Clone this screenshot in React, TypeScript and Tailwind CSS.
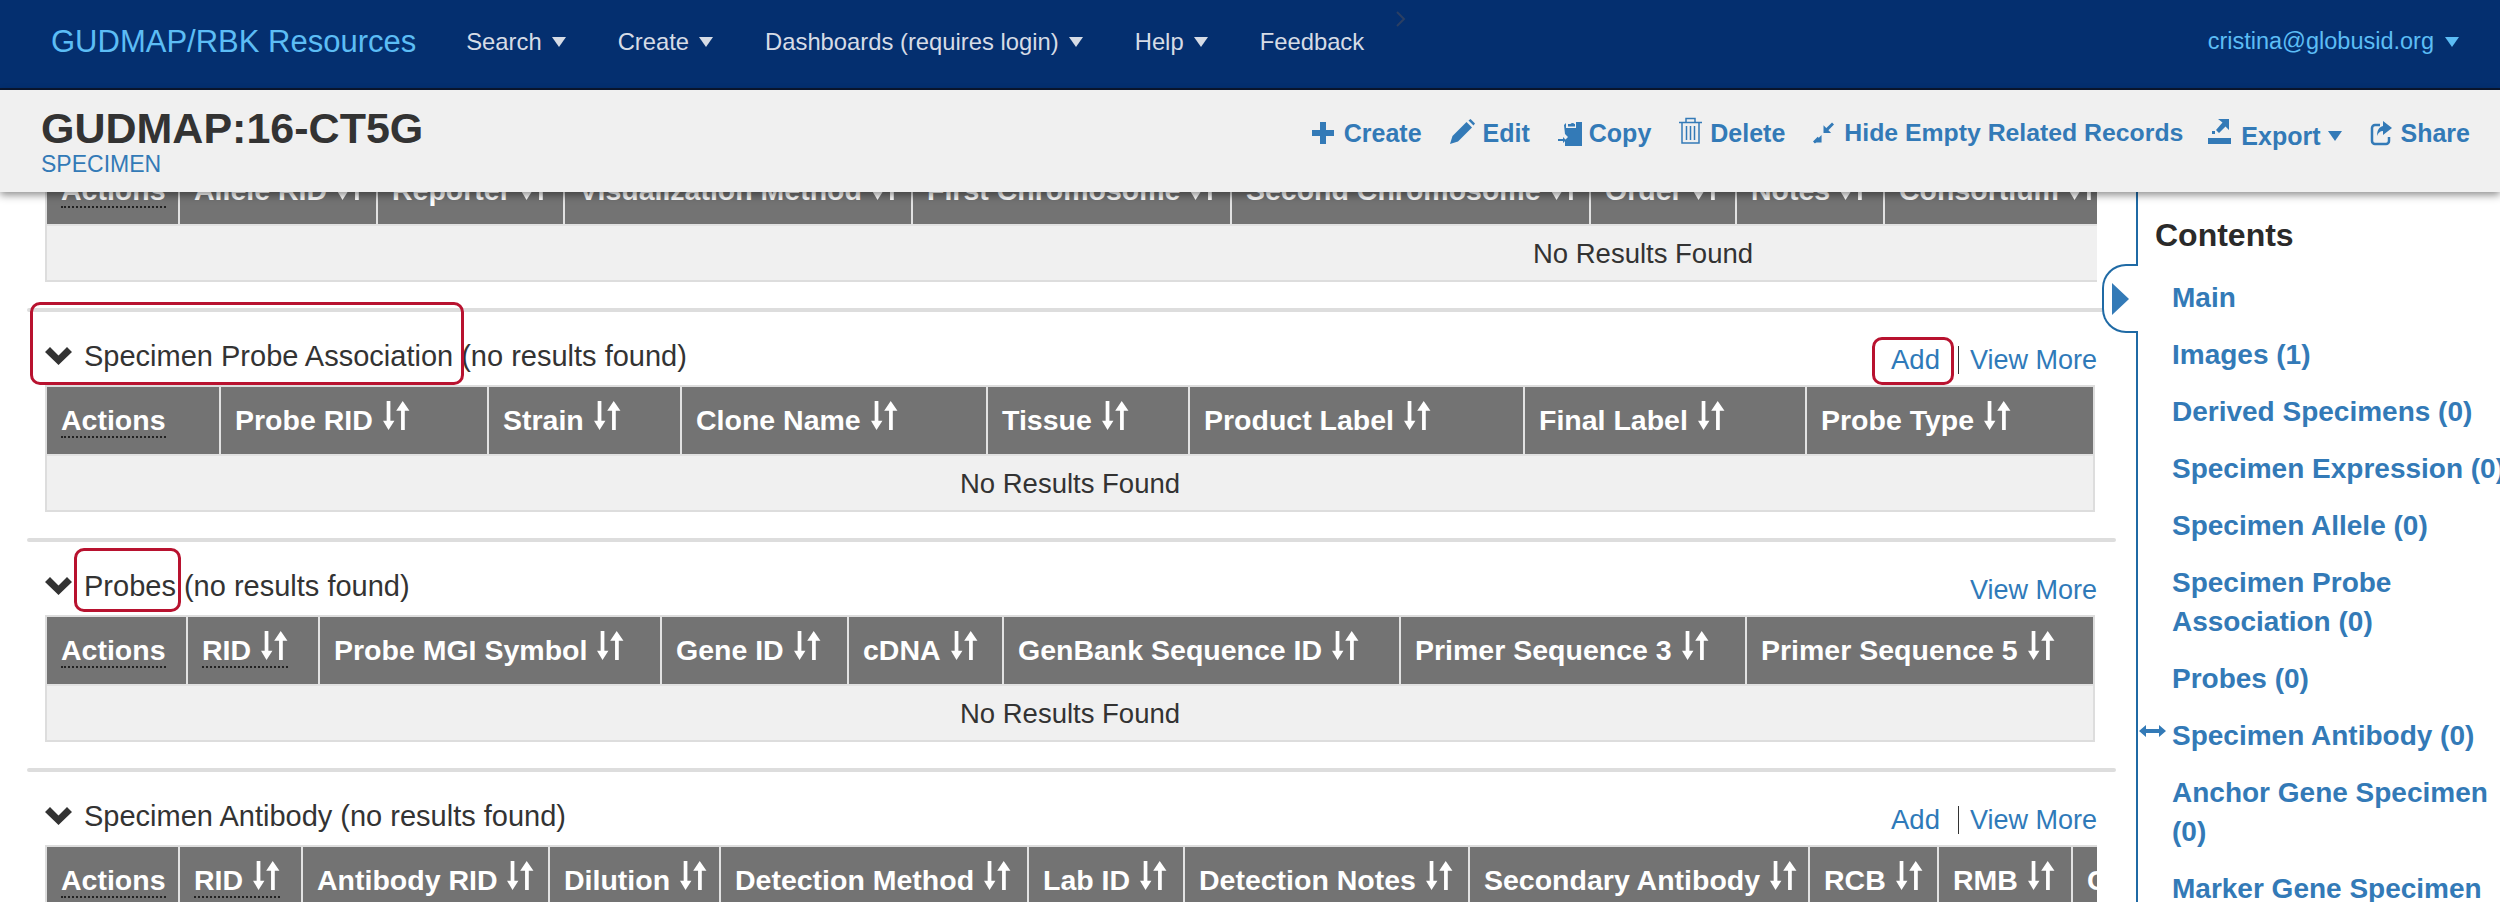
import type { ReactNode } from 'react';

type Col = { label: string; width: string; dotted?: boolean };

function Caret({ className = 'text-[#d6dce6]' }: { className?: string }) {
  return (
    <svg width="14" height="10" viewBox="0 0 14 10" className={`fill-current ${className}`}>
      <path d="M0 0h14L7 10z" />
    </svg>
  );
}

function SortIcon() {
  return (
    <svg width="27" height="29" viewBox="0 0 26 28" className="relative -top-[5px] fill-white shrink-0">
      <path d="M3.500 0h3.600v19h3.900L5.300 28 0 19h3.500z" />
      <path d="M17.400 28h3.600V9.500h4.500L19 0l-6.300 9.500h4.700z" />
    </svg>
  );
}

function Chevron() {
  return (
    <svg width="27" height="18" viewBox="0 0 27 18" className="fill-[#333] shrink-0">
      <path d="M0 5l5-5 8.500 8.500L22 0l5 5-13.500 13z" />
    </svg>
  );
}

const probeAssocCols: Col[] = [
  { label: 'Actions', width: 'w-[174px]', dotted: true },
  { label: 'Probe RID', width: 'w-[268px]' },
  { label: 'Strain', width: 'w-[193px]' },
  { label: 'Clone Name', width: 'w-[306px]' },
  { label: 'Tissue', width: 'w-[202px]' },
  { label: 'Product Label', width: 'w-[335px]' },
  { label: 'Final Label', width: 'w-[282px]' },
  { label: 'Probe Type', width: 'w-[286px]' },
];

const probeCols: Col[] = [
  { label: 'Actions', width: 'w-[141px]', dotted: true },
  { label: 'RID', width: 'w-[132px]', dotted: true },
  { label: 'Probe MGI Symbol', width: 'w-[342px]' },
  { label: 'Gene ID', width: 'w-[187px]' },
  { label: 'cDNA', width: 'w-[155px]' },
  { label: 'GenBank Sequence ID', width: 'w-[397px]' },
  { label: 'Primer Sequence 3', width: 'w-[346px]' },
  { label: 'Primer Sequence 5', width: 'w-[346px]' },
];

const antibodyCols: Col[] = [
  { label: 'Actions', width: 'w-[133px]', dotted: true },
  { label: 'RID', width: 'w-[123px]', dotted: true },
  { label: 'Antibody RID', width: 'w-[247px]' },
  { label: 'Dilution', width: 'w-[171px]' },
  { label: 'Detection Method', width: 'w-[308px]' },
  { label: 'Lab ID', width: 'w-[156px]' },
  { label: 'Detection Notes', width: 'w-[285px]' },
  { label: 'Secondary Antibody', width: 'w-[340px]' },
  { label: 'RCB', width: 'w-[129px]' },
  { label: 'RMB', width: 'w-[134px]' },
  { label: 'Consortium', width: 'w-[1166px]' },
];

const alleleCols: Col[] = [
  { label: 'Actions', width: 'w-[133px]', dotted: true },
  { label: 'Allele RID', width: 'w-[198px]' },
  { label: 'Reporter', width: 'w-[187px]' },
  { label: 'Visualization Method', width: 'w-[348px]' },
  { label: 'First Chromosome', width: 'w-[319px]' },
  { label: 'Second Chromosome', width: 'w-[359px]' },
  { label: 'Order', width: 'w-[146px]' },
  { label: 'Notes', width: 'w-[148px]' },
  { label: 'Consortium', width: 'w-[1354px]' },
];

function HeaderCell({ col }: { col: Col }) {
  return (
    <th className={`${col.width} h-[67px] border-r-2 border-[#e2e2e2] bg-[#737373] pl-[14px] text-left align-middle text-[28.5px] font-bold text-white whitespace-nowrap last:border-r-0`}>
      {col.dotted ? (
        <span className="inline-flex items-center gap-[10px] border-b-2 border-dotted border-[#222] leading-[32px]">
          {col.label}
          {col.label !== 'Actions' && <SortIcon />}
        </span>
      ) : (
        <span className="inline-flex items-center gap-[10px] leading-[32px]">
          {col.label}
          <SortIcon />
        </span>
      )}
    </th>
  );
}

function ResultsTable({ cols }: { cols: Col[] }) {
  return (
    <div className="ml-[45px] w-[2050px] overflow-hidden border-2 border-[#ddd]">
      <table className="w-[2046px] table-fixed border-separate border-spacing-0">
        <thead>
          <tr>
            {cols.map((col) => (
              <HeaderCell key={col.label} col={col} />
            ))}
          </tr>
        </thead>
        <tbody>
          <tr>
            <td colSpan={cols.length} className="h-[56px] border-t-2 border-[#e2e2e2] bg-[#f0f0f0] pt-[2px] text-center text-[27.5px] text-[#333]">
              No Results Found
            </td>
          </tr>
        </tbody>
      </table>
    </div>
  );
}

// wider than the page column, so it runs out at the right like a scrolled table
function ClippedTable({ cols }: { cols: Col[] }) {
  return (
    <div className="ml-[45px] w-[2052px] overflow-hidden border-y-2 border-l-2 border-[#ddd]">
      <table className="w-[3192px] table-fixed border-separate border-spacing-0">
        <thead>
          <tr>
            {cols.map((col) => (
              <HeaderCell key={col.label} col={col} />
            ))}
          </tr>
        </thead>
        <tbody>
          <tr>
            <td colSpan={cols.length} className="h-[56px] border-t-2 border-[#e2e2e2] bg-[#f0f0f0] pt-[2px] text-center text-[27.5px] text-[#333]">
              No Results Found
            </td>
          </tr>
        </tbody>
      </table>
    </div>
  );
}

function Section({
  title,
  add,
  children,
  marks,
}: {
  title: string;
  add?: boolean;
  children: ReactNode;
  marks?: ReactNode;
}) {
  return (
    <section className="relative mt-[26px]">
      <div className="ml-[27px] mr-[20px] h-[4px] rounded-sm bg-[#ddd]" />
      <div className="flex h-[73px] justify-between pl-[45px] pr-[39px]">
        <div className="flex items-center gap-[12px] self-start pt-[24px] text-[29px] leading-[40px] text-[#333]">
          <Chevron />
          <span>{title} (no results found)</span>
        </div>
        <div className="flex items-start pt-[28px] text-[27px] leading-[40px] text-[#2f7ab9]">
          {add && (
            <>
              <span className="text-[27.5px]">Add</span>
              <span className="ml-[18px] mr-[11px] mt-[6px] h-[28px] w-px bg-[#333]" />
            </>
          )}
          <span>View More</span>
        </div>
      </div>
      {children}
      {marks}
    </section>
  );
}

function Mark({ className }: { className: string }) {
  return <div className={`absolute rounded-[10px] border-[3px] border-[#b8122f] ${className}`} />;
}

const navItems = ['Search', 'Create', 'Dashboards (requires login)', 'Help'];

const contents = [
  'Main',
  'Images (1)',
  'Derived Specimens (0)',
  'Specimen Expression (0)',
  'Specimen Allele (0)',
  'Specimen Probe Association (0)',
  'Probes (0)',
  'Specimen Antibody (0)',
  'Anchor Gene Specimen (0)',
  'Marker Gene Specimen (0)',
];

export default function App() {
  return (
    <div className="flex h-[902px] w-[2500px] flex-col overflow-hidden bg-white font-['Liberation_Sans',sans-serif]">
      <nav className="relative flex h-[90px] shrink-0 items-center justify-between border-b-2 border-[#0a1730] bg-[#042f6f] pb-[4px] pl-[51px] pr-[41px]">
        <div className="flex items-center">
          <span className="mr-[50px] text-[31px] text-[#5cbdf5]">GUDMAP/RBK Resources</span>
          <div className="flex items-center gap-[52px] text-[23.8px] text-[#d6dce6]">
            {navItems.map((item) => (
              <span key={item} className="flex items-center gap-[10px]">
                {item}
                <Caret />
              </span>
            ))}
            <span>Feedback</span>
          </div>
        </div>
        <span className="flex items-center gap-[11px] text-[23.5px] text-[#5cbdf5]">
          cristina@globusid.org
          <Caret className="text-[#5cbdf5]" />
        </span>
        <svg width="10" height="16" viewBox="0 0 10 16" className="absolute left-[1396px] top-[11px] fill-none stroke-[#2b3f63] stroke-2">
          <path d="M1 1l7 7-7 7" />
        </svg>
      </nav>

      <header className="relative z-10 flex h-[102px] shrink-0 items-start justify-between bg-[#f0f0f0] pl-[41px] pr-[30px] shadow-[0_3px_8px_rgba(0,0,0,0.45)]">
        <div className="pt-[15px]">
          <h1 className="text-[43px] font-bold leading-[46px] text-[#333]">GUDMAP:16-CT5G</h1>
          <div className="text-[23px] leading-[26px] text-[#337ab7]">SPECIMEN</div>
        </div>
        <div className="flex items-center gap-[28px] pt-[22px] text-[25px] font-bold leading-[36px] text-[#337ab7]">
          <span className="flex items-center gap-[10px]">
            <svg width="22" height="22" viewBox="0 0 22 22" className="fill-current">
              <path d="M8 0h6v8h8v6h-8v8H8v-8H0V8h8z" />
            </svg>
            Create
          </span>
          <span className="flex items-center gap-[8px]">
            <svg width="25" height="25" viewBox="0 0 25 25" className="-mt-[4px] fill-current">
              <path d="M0 25l2.500-8L16.500 3l5.500 5.500L8 22.500z" />
              <path d="M18.500 1.500L20.500 0 25 4.500 23.500 6.500z" />
            </svg>
            Edit
          </span>
          <span className="flex items-center gap-[7px]">
            <svg width="24" height="26" viewBox="0 0 24 26" className="fill-current">
              <path d="M6 5l2-2v5h10V2h6v24H7v-6l3-3-3-3z" />
              <path d="M10 4h2.500a2.500 2.500 0 0 1 4 0H17v2.500h-7z" />
              <path d="M0 19h5v-2l3 3-3 3v-2H0z" />
            </svg>
            Copy
          </span>
          <span className="flex items-center gap-[8px]">
            <svg width="23" height="27" viewBox="0 0 23 27" className="-mt-[5px] fill-none stroke-current stroke-[1.500]">
              <path d="M0 5.500h23M7 5V1.500h9V5M3 6v20h17V6M7.500 9v14M11.500 9v14M15.500 9v14" />
            </svg>
            Delete
          </span>
          <span className="-mr-[3px] flex items-center gap-[10px]">
            <svg width="21" height="22" viewBox="0 0 22 22" className="fill-current stroke-current">
              <path d="M11 3v8h8z" stroke="none" />
              <path d="M9 13v8H1z" stroke="none" />
              <path d="M21 1l-7 7M1 21l5-5" strokeWidth="3" />
            </svg>
            <span className="text-[24.8px]">Hide Empty Related Records</span>
          </span>
          <span className="flex items-center gap-[10px]">
            <svg width="23" height="26" viewBox="0 0 23 26" className="-mt-[5px] fill-current">
              <path d="M10 1h11v11l-3.500-3.500L11 15l-3-3 6.500-7.500z" />
              <path d="M4 13h3v3H4z" />
              <path d="M0 20h23v6H0z" />
            </svg>
            <span className="mt-[6px] flex items-center gap-[7px]">
              Export
              <Caret className="text-[#337ab7]" />
            </span>
          </span>
          <span className="flex items-center gap-[8px]">
            <svg width="23" height="26" viewBox="0 0 23 26" className="fill-none stroke-current stroke-[2.500]">
              <path d="M10 5H5a3 3 0 0 0-3 3v13a3 3 0 0 0 3 3h11a3 3 0 0 0 3-3v-4" />
              <path d="M13 1l9 7-9 7v-4c-3 0-5 2-6 5 0-6 2-9 6-10z" className="fill-current stroke-none" />
            </svg>
            Share
          </span>
        </div>
      </header>

      <main className="flex min-h-0 flex-1 overflow-hidden">
        <div className="w-[2136px] shrink-0">
          <div className="-mt-[37px]">
            <ClippedTable cols={alleleCols} />
          </div>
          <Section
            title="Specimen Probe Association"
            add
            marks={
              <>
                <Mark className="-top-[6px] left-[30px] h-[83px] w-[434px]" />
                <Mark className="left-[1872px] top-[29px] h-[48px] w-[82px]" />
              </>
            }
          >
            <ResultsTable cols={probeAssocCols} />
          </Section>
          <Section title="Probes" marks={<Mark className="left-[74px] top-[10px] h-[64px] w-[107px]" />}>
            <ResultsTable cols={probeCols} />
          </Section>
          <Section title="Specimen Antibody" add>
            <ClippedTable cols={antibodyCols} />
          </Section>
        </div>

        <aside className="relative w-[364px] shrink-0 border-l-2 border-[#1f6aa5] pl-[17px]">
          <div className="absolute -left-[36px] top-[72px] flex h-[69px] w-[36px] items-center rounded-l-[24px] border-2 border-r-0 border-[#1f6aa5] bg-white pl-[8px]">
            <svg width="17" height="32" viewBox="0 0 17 32" className="fill-[#337ab7]">
              <path d="M0 0l17 16L0 32z" />
            </svg>
          </div>
          <svg width="27" height="12" viewBox="0 0 27 12" className="absolute left-[1px] top-[533px] fill-[#337ab7]">
            <path d="M0 6l7-6v4h13V0l7 6-7 6V8H7v4z" />
          </svg>
          <h2 className="pt-[21px] text-[32px] font-bold leading-[44px] text-[#2a2a2a]">Contents</h2>
          <ul className="mt-[21px] flex w-[352px] flex-col gap-[18px] pl-[17px] text-[28px] font-bold leading-[39px] text-[#337ab7]">
            {contents.map((item) => (
              <li key={item}>{item}</li>
            ))}
          </ul>
        </aside>
      </main>
    </div>
  );
}
